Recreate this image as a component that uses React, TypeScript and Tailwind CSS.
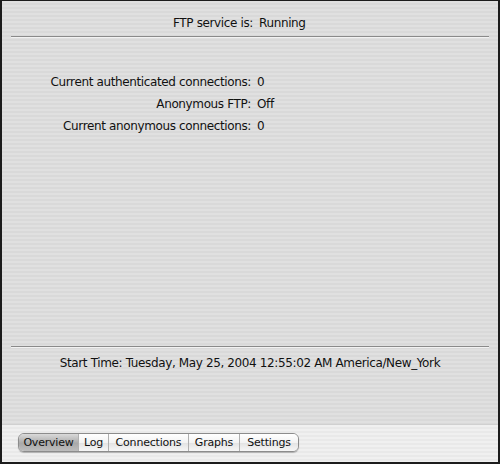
import React from 'react';

const rows = [
  { label: 'Current authenticated connections:', value: '0' },
  { label: 'Anonymous FTP:', value: 'Off' },
  { label: 'Current anonymous connections:', value: '0' },
];

const tabs = [
  { name: 'Overview', w: 'w-[59px]', active: true },
  { name: 'Log', w: 'w-[30px]', active: false },
  { name: 'Connections', w: 'w-[80px]', active: false },
  { name: 'Graphs', w: 'w-[51px]', active: false },
  { name: 'Settings', w: 'w-[59px]', active: false },
];

const App = () => {
  return (
    <div className="w-[500px] h-[464px] flex flex-col border-t border-l-2 border-r-2 border-b-2 border-[#1c1c1c] text-[#111] text-[12px] font-['DejaVu_Sans',sans-serif] tracking-[-0.37px]">
      {/* Main pinstripe pane */}
      <div className="flex-1 flex flex-col bg-[repeating-linear-gradient(to_bottom,#e0e0e0_0px,#e0e0e0_2px,#d9d9d9_2px,#d9d9d9_4px)]">
        <div className="h-[35px] pt-[13px] grid grid-cols-[251px_1fr] gap-x-[6px] leading-[18px]">
          <div className="text-right">FTP service is:</div>
          <div>Running</div>
        </div>
        <div className="mx-[9px]">
          <div className="h-px bg-[#8a8a8a]" />
          <div className="h-px bg-[#f2f2f2]" />
        </div>

        <div className="pt-[33px] grid grid-cols-[249px_1fr] gap-x-[6px]">
          {rows.map((r) => (
            <React.Fragment key={r.label}>
              <div className="text-right leading-[22px]">{r.label}</div>
              <div className="leading-[22px]">{r.value}</div>
            </React.Fragment>
          ))}
        </div>

        <div className="flex-1" />

        <div className="mx-[9px]">
          <div className="h-px bg-[#8a8a8a]" />
          <div className="h-px bg-[#f2f2f2]" />
        </div>
        <div className="h-[76px] pt-[6px] text-center leading-[18px]">
          Start Time: Tuesday, May 25, 2004 12:55:02 AM America/New_York
        </div>
      </div>

      {/* Tab bar */}
      <div className="h-[38px] pt-[8px] pl-[16px] bg-[repeating-linear-gradient(to_bottom,#f0f0f0_0px,#f0f0f0_2px,#e9e9e9_2px,#e9e9e9_4px)] border-t border-[#d0d0d0]">
        <div className="inline-flex h-[19px] rounded-[6px] border border-[#8c8c8c] overflow-hidden shadow-[0_1px_1px_rgba(0,0,0,0.25)] text-[11px] tracking-[-0.2px]">
          {tabs.map((t, i) => (
            <div
              key={t.name}
              className={`${t.w} flex items-center justify-center leading-none ${
                i > 0 ? 'border-l border-[#b0b0b0]' : ''
              } ${
                t.active
                  ? 'bg-[linear-gradient(to_bottom,#dadada,#a9a9a9_55%,#bdbdbd)]'
                  : 'bg-[linear-gradient(to_bottom,#ffffff,#f3f3f3_50%,#e4e4e4_55%,#f6f6f6)]'
              }`}
            >
              {t.name}
            </div>
          ))}
        </div>
      </div>
    </div>
  );
};

export default App;
